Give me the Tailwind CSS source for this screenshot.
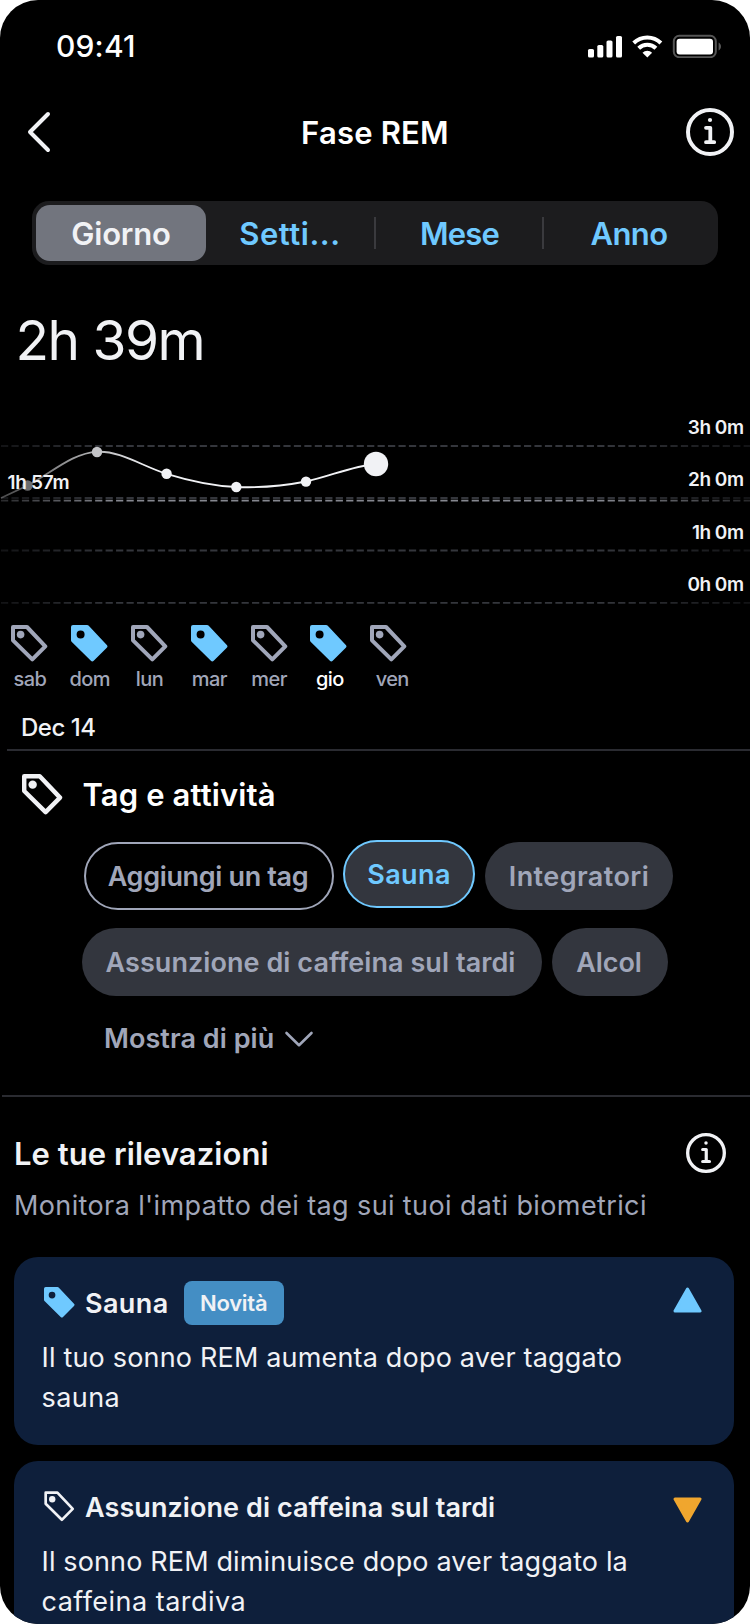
<!DOCTYPE html>
<html lang="it">
<head>
<meta charset="utf-8">
<title>Fase REM</title>
<script src="https://cdn.jsdelivr.net/npm/@tailwindcss/browser@4"></script>
</head>
<body class="bg-white">
<svg class="hidden">
  <symbol id="tag" viewBox="0 0 37 37">
    <path d="M2 2H16L34.3 21.3 21.3 34.4 2 15.3Z" fill="none" stroke="currentColor" stroke-width="4" stroke-linejoin="round"/>
    <circle cx="9.6" cy="9.6" r="3.8" fill="currentColor"/>
  </symbol>
  <symbol id="tag-thin" viewBox="0 0 37 37">
    <path d="M2 2H16L34.3 21.3 21.3 34.4 2 15.3Z" fill="none" stroke="currentColor" stroke-width="3.2" stroke-linejoin="round"/>
    <circle cx="9.8" cy="9.8" r="3.8" fill="currentColor"/>
  </symbol>
  <symbol id="tag-fill" viewBox="0 0 37 37">
    <path fill-rule="evenodd" d="M2 0H16a2 2 0 0 1 1.500.600L35.800 19.900a2 2 0 0 1 0 2.800L22.700 35.800a2 2 0 0 1-2.800 0L.6 16.700A2 2 0 0 1 0 15.300V2A2 2 0 0 1 2 0ZM9.600 5.600a4 4 0 1 0 0 8a4 4 0 1 0 0-8Z" fill="currentColor"/>
  </symbol>
  <symbol id="info" viewBox="0 0 48 48">
    <circle cx="24" cy="24" r="22" fill="none" stroke="currentColor" stroke-width="4"/>
    <circle cx="24" cy="12" r="2.1" fill="currentColor"/>
    <path d="M20 19.8h4.3v14.2M20 34.2h8.2" fill="none" stroke="currentColor" stroke-width="3.8" stroke-linecap="round" stroke-linejoin="round"/>
  </symbol>
</svg>
<div class="flex h-[1624px] w-[750px] flex-col overflow-hidden rounded-[38px] bg-black font-['Inter','Liberation_Sans',sans-serif] whitespace-nowrap text-[#f1f2f5] [font-variant-ligatures:none]">

  <!-- Status bar -->
  <div class="flex h-[92px] shrink-0 items-center pr-[29px] pl-14 text-white">
    <span class="flex-1 text-[30px] leading-[90px] font-medium tracking-[0.18px]">09:41</span>
    <svg class="h-6 w-[134px]" viewBox="0 0 134 24">
      <g fill="#fff">
        <rect x="1" y="15" width="6" height="8.5" rx="1.6"/>
        <rect x="10.300" y="11" width="6" height="12.500" rx="1.6"/>
        <rect x="19.500" y="6.500" width="6" height="17" rx="1.6"/>
        <rect x="29" y="2" width="6" height="21.500" rx="1.6"/>
        <path d="M60.300 23.500L55.500 18.700A7 7 0 0 1 65.100 18.700Z"/>
      </g>
      <g fill="none" stroke="#fff" stroke-width="4">
        <path d="M46.700 9A19.500 19.500 0 0 1 73.900 9"/>
        <path d="M51.700 14.300A12.300 12.300 0 0 1 68.900 14.300"/>
      </g>
      <rect x="86.800" y="1.800" width="42" height="21.400" rx="5.500" fill="none" stroke="#565656" stroke-width="2"/>
      <rect x="89.600" y="4.800" width="36.400" height="15.600" rx="3" fill="#fff"/>
      <path d="M131.600 8.500c3.200 1.400 3.200 6.600 0 8z" fill="#565656"/>
    </svg>
  </div>

  <!-- Title bar -->
  <div class="flex h-20 shrink-0 items-center justify-between pr-4 pl-6">
    <svg class="h-12 w-12" viewBox="0 0 48 48" fill="none" stroke="#f1f2f5" stroke-width="4" stroke-linecap="round" stroke-linejoin="round"><path d="M24 6L6 24l18 18"/></svg>
    <span class="mt-0.5 mr-2 text-[31px] leading-[80px] font-semibold tracking-[0.2px] text-white">Fase REM</span>
    <svg class="h-12 w-12"><use href="#info"/></svg>
  </div>

  <!-- Period selector -->
  <div class="mt-[29px] ml-8 flex h-16 w-[686px] shrink-0 items-center rounded-[17px] bg-[#1c1c1e] p-1 text-[31px] font-semibold text-[#6fc9ff]">
    <div class="flex h-14 w-[170px] items-center justify-center rounded-[14px] bg-[#72757e] pt-0.5 tracking-[-0.16px] text-[#f1f2f5]">Giorno</div>
    <div class="w-[168px] pt-0.5 text-center tracking-[0.53px]">Setti...</div>
    <div class="h-8 w-0.5 bg-[#3a3a3e]"></div>
    <div class="w-[167px] pt-0.5 text-center tracking-[-0.8px]">Mese</div>
    <div class="-ml-px h-8 w-0.5 bg-[#3a3a3e]"></div>
    <div class="flex-1 pt-0.5 text-center tracking-[-0.6px]">Anno</div>
  </div>

  <div class="mt-[40px] h-[70px] shrink-0 pl-[15.500px] text-[55px] leading-[70px] tracking-[-1.5px]">2h 39m</div>

  <!-- Chart -->
  <svg class="mt-[25px] h-[210px] w-[750px] shrink-0" viewBox="0 400 750 210">
    <defs>
      <linearGradient id="faint" gradientUnits="userSpaceOnUse" x1="0" x2="750" y1="0" y2="0">
        <stop offset="0" stop-color="#34363c" stop-opacity=".35"/><stop offset=".15" stop-color="#34363c"/><stop offset=".8" stop-color="#34363c"/><stop offset="1" stop-color="#34363c" stop-opacity=".35"/>
      </linearGradient>
      <linearGradient id="strong" gradientUnits="userSpaceOnUse" x1="0" x2="750" y1="0" y2="0">
        <stop offset="0" stop-color="#85878f" stop-opacity=".3"/><stop offset=".15" stop-color="#85878f"/><stop offset=".8" stop-color="#85878f"/><stop offset="1" stop-color="#85878f" stop-opacity=".3"/>
      </linearGradient>
      <linearGradient id="curve" gradientUnits="userSpaceOnUse" x1="0" x2="150" y1="0" y2="0">
        <stop offset="0" stop-color="#f1f2f5" stop-opacity=".3"/><stop offset="1" stop-color="#f1f2f5"/>
      </linearGradient>
    </defs>
    <g fill="none" stroke-dasharray="7.2 3.26" stroke-width="1.8">
      <path d="M1 446H750M1 498H750M1 550.500H750M1 602.800H750" stroke="url(#faint)"/>
      <path d="M1 500.600H750" stroke="url(#strong)"/>
    </g>
    <path d="M1 498L27.500 485.500C50 474 73 452.500 97 451.800C120 450.500 142 466 166.500 473.800C190 481 213 486 236.300 487C260 488 283 486 306 481.500C330 476.500 352 466 376 464" fill="none" stroke="url(#curve)" stroke-width="1.8"/>
    <g fill="#f1f2f5">
      <circle cx="27.500" cy="485.500" r="5.200" fill="#6b6c6e"/>
      <circle cx="97" cy="452" r="5.200" fill="#c3c4c7"/>
      <circle cx="166.600" cy="473.700" r="5.200"/>
      <circle cx="236.300" cy="487" r="5.200"/>
      <circle cx="306" cy="481.600" r="5.200"/>
      <circle cx="376" cy="464" r="12.200"/>
    </g>
    <g class="text-[19px] font-semibold" fill="#f1f2f5">
      <text x="7.500" y="489" letter-spacing="-.28">1h 57m</text>
      <g text-anchor="end" letter-spacing="-.5">
        <text x="743.500" y="434">3h 0m</text>
        <text x="743.500" y="486">2h 0m</text>
        <text x="743.500" y="538.500">1h 0m</text>
        <text x="743.500" y="591">0h 0m</text>
      </g>
    </g>
  </svg>

  <!-- Days -->
  <div class="mt-[15px] flex shrink-0 text-center text-xl leading-[26px] font-medium tracking-[-0.6px] text-[#a0a6b9]">
    <div class="flex w-[59.800px] flex-col items-center"><svg class="h-[37px] w-[37px]"><use href="#tag"/></svg><span class="mt-1">sab</span></div>
    <div class="flex w-[59.800px] flex-col items-center"><svg class="h-[37px] w-[37px] text-[#6fc9ff]"><use href="#tag-fill"/></svg><span class="mt-1">dom</span></div>
    <div class="flex w-[59.800px] flex-col items-center"><svg class="h-[37px] w-[37px]"><use href="#tag"/></svg><span class="mt-1">lun</span></div>
    <div class="flex w-[59.800px] flex-col items-center"><svg class="h-[37px] w-[37px] text-[#6fc9ff]"><use href="#tag-fill"/></svg><span class="mt-1">mar</span></div>
    <div class="flex w-[59.800px] flex-col items-center"><svg class="h-[37px] w-[37px]"><use href="#tag"/></svg><span class="mt-1">mer</span></div>
    <div class="flex w-[59.800px] flex-col items-center"><svg class="h-[37px] w-[37px] text-[#6fc9ff]"><use href="#tag-fill"/></svg><span class="mt-1 ml-0.5 text-white">gio</span></div>
    <div class="flex w-[59.800px] flex-col items-center"><svg class="h-[37px] w-[37px]"><use href="#tag"/></svg><span class="mt-1 ml-[7px]">ven</span></div>
  </div>
  <div class="mt-[17px] h-10 shrink-0 pl-[21px] text-2xl leading-[38px] font-medium tracking-[-0.5px]">Dec 14</div>
  <div class="ml-[7px] h-0.5 shrink-0 bg-[#2a2b31]"></div>

  <!-- Tags -->
  <div class="mt-[22px] flex h-11 shrink-0 items-center gap-[20px] pl-[21.500px]">
    <svg class="-mt-0.5 h-[41px] w-[41px]"><use href="#tag"/></svg>
    <span class="text-[31px] leading-[44px] font-semibold tracking-[0.13px] text-white">Tag e attività</span>
  </div>
  <div class="mt-[25px] ml-[82px] flex shrink-0 flex-col gap-[18px] text-[27px] font-semibold text-[#a0a6b9]">
    <div class="flex h-[68px]">
      <div class="ml-0.5 flex w-[250px] items-center justify-center rounded-full border-2 border-[#a0a6b9] pt-0.5 pr-0.5 tracking-[-0.35px]">Aggiungi un tag</div>
      <div class="-mt-0.5 mb-0.5 ml-[9px] flex w-[132px] items-center justify-center rounded-full border-2 border-[#6fc9ff] bg-[#33363e] pt-0.5 tracking-[0.4px] text-[#6fc9ff]">Sauna</div>
      <div class="ml-[10px] flex w-[188px] items-center justify-center rounded-full bg-[#33363e] pt-0.5 tracking-[0.42px]">Integratori</div>
    </div>
    <div class="flex h-[68px] gap-2.5">
      <div class="flex w-[460px] items-center justify-center rounded-full bg-[#33363e] pt-0.5 pr-[3px] tracking-[0.06px]">Assunzione di caffeina sul tardi</div>
      <div class="flex w-[116px] items-center justify-center rounded-full bg-[#33363e] pt-0.5 pr-0.5 tracking-[-0.05px]">Alcol</div>
    </div>
  </div>
  <div class="mt-[23px] flex h-10 shrink-0 items-center gap-[10px] pl-[104px] text-[27px] font-semibold text-[#a0a6b9]">
    <span class="leading-10 tracking-[0.05px]">Mostra di più</span>
    <svg class="h-[18px] w-[30px]" viewBox="0 0 30 18" fill="none" stroke="currentColor" stroke-width="2.6" stroke-linecap="round" stroke-linejoin="round"><path d="M2.500 3L15 15.200 27.500 3"/></svg>
  </div>
  <div class="mt-[36px] ml-0.5 h-0.5 shrink-0 bg-[#2a2b31]"></div>

  <!-- Insights -->
  <div class="mt-[36px] flex h-10 shrink-0 items-center justify-between pr-6 pl-[14px]">
    <span class="mt-0.5 text-[31px] leading-10 font-semibold tracking-[0.05px]">Le tue rilevazioni</span>
    <svg class="h-10 w-10"><use href="#info"/></svg>
  </div>
  <div class="mt-[13px] h-10 shrink-0 pl-[14px] text-[27px] leading-10 tracking-[0.38px] text-[#a0a6b9]">Monitora l'impatto dei tag sui tuoi dati biometrici</div>

  <div class="mt-[31px] ml-[13.500px] flex w-[720px] shrink-0 flex-col gap-4">
    <div class="h-[188px] rounded-3xl bg-[#0e1f3b] pt-6 pr-[32px] pl-[30px]">
      <div class="flex h-11 items-center">
        <svg class="-mt-px h-[31px] w-[31px] text-[#6fc9ff]"><use href="#tag-fill"/></svg>
        <span class="mt-0.5 ml-[10.500px] text-[27px] font-semibold tracking-[0.4px]">Sauna</span>
        <span class="ml-[15px] flex h-11 w-[100px] items-center justify-center rounded-lg bg-[#448ec4] text-[22px] font-semibold tracking-[-0.25px]">Novità</span>
        <svg class="mb-1.5 ml-auto h-[26px] w-[29px]" viewBox="0 0 29 26"><path d="M14.500 2L27 24H2Z" fill="#6fc9ff" stroke="#6fc9ff" stroke-width="3" stroke-linejoin="round"/></svg>
      </div>
      <div class="mt-[13px] -ml-[2px] text-[27px] leading-10"><p class="tracking-[0.18px]">Il tuo sonno REM aumenta dopo aver taggato</p><p class="tracking-[0.42px]">sauna</p></div>
    </div>
    <div class="h-[188px] rounded-3xl bg-[#0e1f3b] pt-6 pr-[32px] pl-[30px]">
      <div class="flex h-11 items-center">
        <svg class="-mt-px h-[31px] w-[31px]"><use href="#tag-thin"/></svg>
        <span class="mt-0.5 ml-[10.500px] text-[27px] font-semibold tracking-[0.07px]">Assunzione di caffeina sul tardi</span>
        <svg class="mt-1.5 ml-auto h-[26px] w-[29px]" viewBox="0 0 29 26"><path d="M14.500 24L27 2H2Z" fill="#f0a62e" stroke="#f0a62e" stroke-width="3" stroke-linejoin="round"/></svg>
      </div>
      <div class="mt-[13px] -ml-[2px] text-[27px] leading-10"><p class="tracking-[0.14px]">Il sonno REM diminuisce dopo aver taggato la</p><p class="tracking-[0.47px]">caffeina tardiva</p></div>
    </div>
  </div>
</div>
</body>
</html>
